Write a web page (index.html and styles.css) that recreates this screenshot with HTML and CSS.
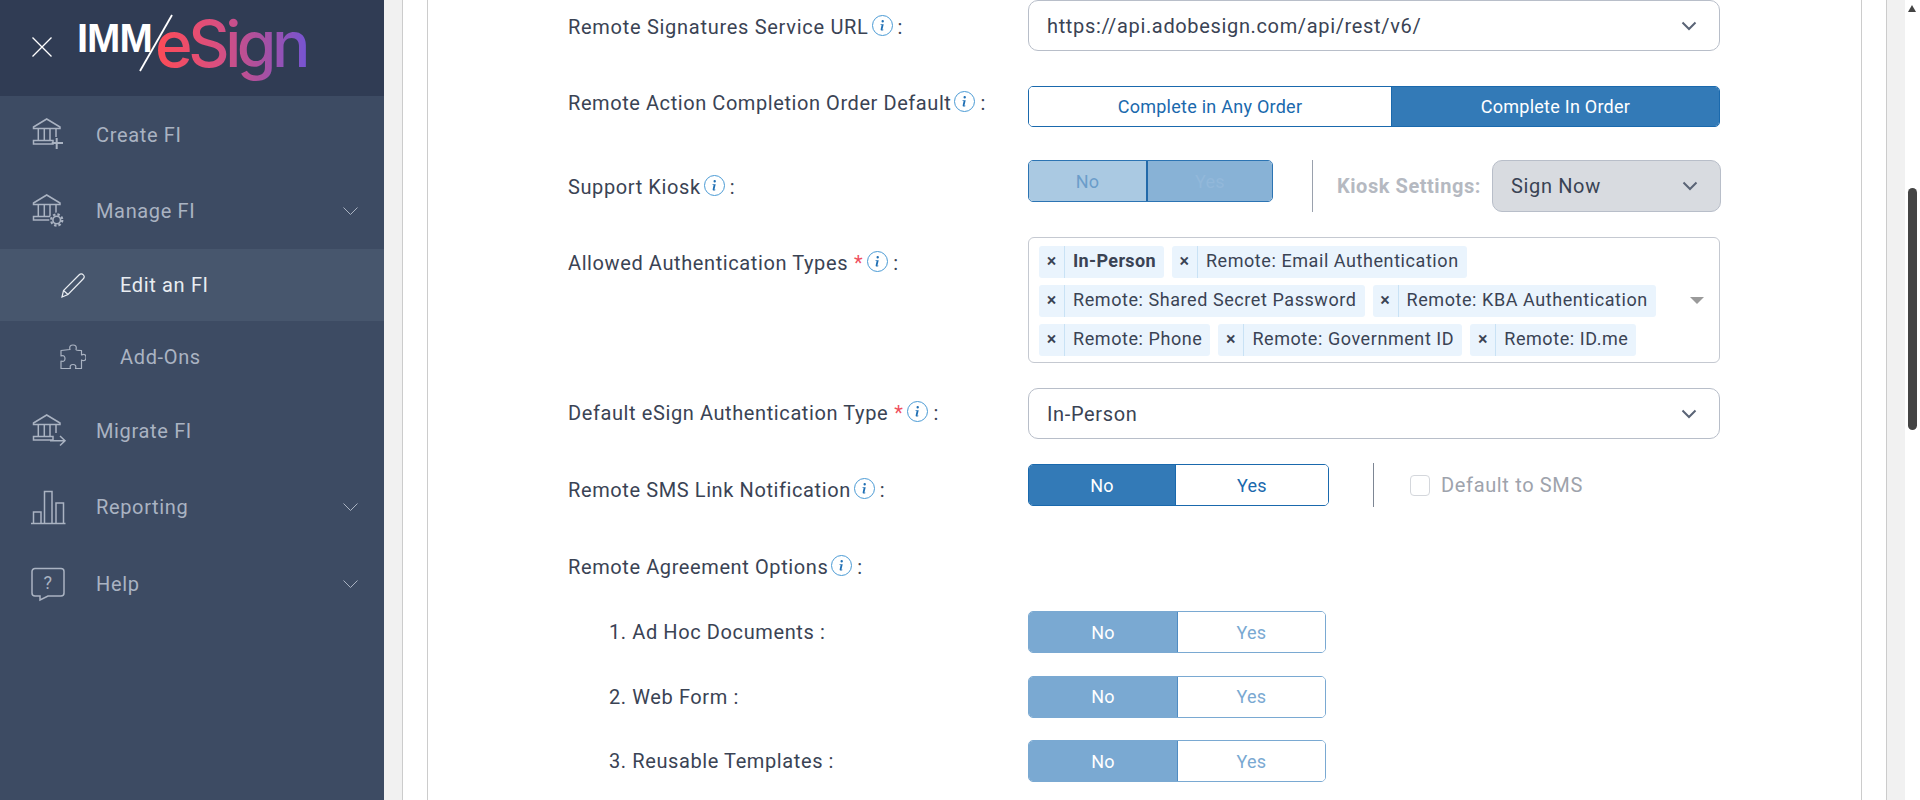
FILE: index.html
```html
<!DOCTYPE html>
<html lang="en">
<head>
<meta charset="utf-8">
<title>IMM eSign</title>
<link rel="stylesheet" href="styles.css">
</head>
<body>
<svg class="defs" aria-hidden="true">
  <symbol id="bank" viewBox="0 0 34 34">
    <path d="M1.500 10 14.700 2 28 10v1.500H1.500z M2.500 11.500v.5 M6.300 11.500V23 M12.300 11.500V23 M18 11.500V23 M24 11.500V20 M1.500 23.500h19.500v3.500H1.500z" fill="none" stroke="currentColor" stroke-width="1.500"/>
  </symbol>
  <symbol id="chev" viewBox="0 0 15 8">
    <path d="M.5.500 7.500 7.500l7-7" fill="none" stroke="currentColor" stroke-width="1"/>
  </symbol>
  <symbol id="selchev" viewBox="0 0 16 10">
    <path d="M1.500 1.500 8 8l6.500-6.500" fill="none" stroke="currentColor" stroke-width="2"/>
  </symbol>
  <symbol id="info" viewBox="0 0 21 21">
    <circle cx="10.500" cy="10.500" r="10" fill="#fff" stroke="#4a9ad4" stroke-width="1"/>
    <path d="M9.500 6.200a1.200 1.200 0 1 1 2.400 0 1.200 1.200 0 0 1-2.400 0zM8.400 9.200h3.300l-1.200 5.100c-.1.500.1.500.9.300l-.1.600c-1.100.5-3 .7-2.600-.9l.9-4.300-1.200-.2z" fill="#1f6fb4"/>
  </symbol>
</svg>
<div class="app">
  <aside class="sidebar">
    <header class="brand">
      <svg class="close" viewBox="0 0 20 20"><path d="M0.500 0.500 19.500 19.500M19.500 0.500 0.500 19.500" stroke="#fff" stroke-width="1.300" fill="none"/></svg>
      <div class="logo">
        <span class="logo-imm">IMM</span>
        <span class="logo-esign">eSign</span>
        <svg class="logo-slash" viewBox="0 0 34 58"><path d="M33 1 1 57" stroke="#fff" stroke-width="1.800"/></svg>
      </div>
    </header>
    <nav class="menu">
      <a class="item">
        <svg class="ico" viewBox="0 0 34 34"><use href="#bank" width="34" height="34"/><path d="M24.700 21v11M19.700 26h11.300" fill="none" stroke="currentColor" stroke-width="2"/></svg>
        <span>Create FI</span>
      </a>
      <a class="item">
        <svg class="ico" viewBox="0 0 34 34"><use href="#bank" width="34" height="34"/><circle cx="24.700" cy="27" r="7.500" fill="#3d4b63"/><circle cx="24.700" cy="27" r="3.800" fill="none" stroke="currentColor" stroke-width="1.600"/><circle cx="24.700" cy="27" r="5.600" fill="none" stroke="currentColor" stroke-width="2.200" stroke-dasharray="2.400 2.000"/></svg>
        <span>Manage FI</span>
        <svg class="chev"><use href="#chev"/></svg>
      </a>
      <a class="item sub active">
        <svg class="ico-sub" viewBox="0 0 26 26"><path d="M2 25l1.500-6.500L19 3c1.500-1.500 3-1.500 4.300-.2s1.300 2.800-.2 4.200L8 22.500z M3.500 18.500 8 22.500" fill="none" stroke="currentColor" stroke-width="1.200"/></svg>
        <span>Edit an FI</span>
      </a>
      <a class="item sub">
        <svg class="ico-sub" viewBox="0 0 26 26"><path d="M10 5.500C9 2 11 1 13 1s4 1 3 4.500c0 1 5.500 1 5.500 1v4.500c3-1.500 4.500 0 4.500 2.500s-1.500 4-4.500 2.500v8.500h-6c1-3-.5-4-2.500-4s-3.500 1-2.500 4H1v-7.500c3 1 4-.5 4-2.500s-1-3.500-4-2.500V6.500z" fill="none" stroke="currentColor" stroke-width="1.200" stroke-linejoin="round"/></svg>
        <span>Add-Ons</span>
      </a>
      <a class="item">
        <svg class="ico" viewBox="0 0 34 34"><use href="#bank" width="34" height="34"/><path d="M18 27.700h15.500M28 23l5 4.700-5 4.800" fill="none" stroke="currentColor" stroke-width="1.500"/></svg>
        <span>Migrate FI</span>
      </a>
      <a class="item">
        <svg class="ico" viewBox="0 0 34 34"><path d="M1.500 34V23h7.500v11M12.500 34V2.500h7.500V34M24 34V14h7.500v20M-1 34.500h34.500" fill="none" stroke="currentColor" stroke-width="1.500"/></svg>
        <span>Reporting</span>
        <svg class="chev"><use href="#chev"/></svg>
      </a>
      <a class="item help">
        <svg class="ico" viewBox="0 0 34 34"><path d="M3 2.500h26a3 3 0 0 1 3 3v21.500a3 3 0 0 1-3 3H16l-8 4v-4H3a3 3 0 0 1-3-3V5.500a3 3 0 0 1 3-3z" fill="none" stroke="currentColor" stroke-width="1.500"/><text x="16" y="23" text-anchor="middle" class="help-q">?</text></svg>
        <span>Help</span>
        <svg class="chev"><use href="#chev"/></svg>
      </a>
    </nav>
  </aside>
  <main class="content">
    <div class="outer">
      <section class="card">
        <div class="row row-1">
          <div class="label">Remote Signatures Service URL<svg class="i"><use href="#info"/></svg><span class="colon">:</span></div>
          <div class="select">https://api.adobesign.com/api/rest/v6/<svg class="selchev"><use href="#selchev"/></svg></div>
        </div>
        <div class="row row-2">
          <div class="label">Remote Action Completion Order Default<svg class="i"><use href="#info"/></svg><span class="colon">:</span></div>
          <div class="toggle wide">
            <span class="opt">Complete in Any Order</span>
            <span class="opt on">Complete In Order</span>
          </div>
        </div>
        <div class="row row-3">
          <div class="label">Support Kiosk<svg class="i"><use href="#info"/></svg><span class="colon">:</span></div>
          <div class="controls">
            <div class="toggle kiosk">
              <span class="opt">No</span>
              <span class="opt on">Yes</span>
            </div>
            <div class="divider"></div>
            <span class="kiosk-label">Kiosk Settings:</span>
            <div class="select disabled">Sign Now<svg class="selchev"><use href="#selchev"/></svg></div>
          </div>
        </div>
        <div class="row row-4">
          <div class="label">Allowed Authentication Types<span class="req">*</span><svg class="i"><use href="#info"/></svg><span class="colon">:</span></div>
          <div class="multi">
            <div class="tags">
              <span class="tag"><b class="x">×</b><strong>In-Person</strong></span>
              <span class="tag"><b class="x">×</b><span>Remote: Email Authentication</span></span>
              <span class="tag"><b class="x">×</b><span>Remote: Shared Secret Password</span></span>
              <span class="tag"><b class="x">×</b><span>Remote: KBA Authentication</span></span>
              <span class="tag"><b class="x">×</b><span>Remote: Phone</span></span>
              <span class="tag"><b class="x">×</b><span>Remote: Government ID</span></span>
              <span class="tag"><b class="x">×</b><span>Remote: ID.me</span></span>
            </div>
            <span class="caret"></span>
          </div>
        </div>
        <div class="row row-5">
          <div class="label">Default eSign Authentication Type<span class="req">*</span><svg class="i"><use href="#info"/></svg><span class="colon">:</span></div>
          <div class="select">In-Person<svg class="selchev"><use href="#selchev"/></svg></div>
        </div>
        <div class="row row-6">
          <div class="label">Remote SMS Link Notification<svg class="i"><use href="#info"/></svg><span class="colon">:</span></div>
          <div class="controls">
            <div class="toggle sms">
              <span class="opt on">No</span>
              <span class="opt">Yes</span>
            </div>
            <div class="divider sms-divider"></div>
            <label class="check"><span class="box"></span>Default to SMS</label>
          </div>
        </div>
        <div class="row row-7">
          <div class="label">Remote Agreement Options<svg class="i"><use href="#info"/></svg><span class="colon">:</span></div>
        </div>
        <div class="row row-sub">
          <div class="label indent">1. Ad Hoc Documents :</div>
          <div class="toggle faded">
            <span class="opt on">No</span>
            <span class="opt">Yes</span>
          </div>
        </div>
        <div class="row row-sub">
          <div class="label indent">2. Web Form :</div>
          <div class="toggle faded">
            <span class="opt on">No</span>
            <span class="opt">Yes</span>
          </div>
        </div>
        <div class="row row-sub">
          <div class="label indent">3. Reusable Templates :</div>
          <div class="toggle faded">
            <span class="opt on">No</span>
            <span class="opt">Yes</span>
          </div>
        </div>
      </section>
    </div>
  </main>
  <div class="scrollbar">
    <span class="sb-up"></span>
    <span class="sb-thumb"></span>
  </div>
</div>
</body>
</html>
```
FILE: styles.css
```css
* { box-sizing: border-box; }
html, body { margin: 0; height: 800px; overflow: hidden; }
body { font-family: Roboto, "Liberation Sans", sans-serif; color: #3a4354; }
.defs { position: absolute; width: 0; height: 0; }
.app { display: flex; height: 800px; }

.sidebar { width: 384px; flex: none; background: #3d4b63; color: #aab3c2; }
.brand { height: 96px; background: #303c54; display: flex; align-items: flex-start; padding: 37px 0 0 32px; }
.close { width: 20px; height: 20px; flex: none; }
.logo { position: relative; margin-left: 25px; height: 50px; width: 240px; }
.logo-imm { position: absolute; left: 0; top: -34px; font-family: "Liberation Sans", sans-serif; font-weight: 700; font-size: 40px; letter-spacing: -1px; line-height: 70px; color: #fff; }
.logo-slash { position: absolute; left: 62px; top: -23px; width: 34px; height: 58px; }
.logo-esign { position: absolute; left: 78px; top: -31px; font-family: Inter, sans-serif; font-weight: 500; font-size: 64px; letter-spacing: -4.400px; line-height: 76px; padding-right: 6px; background: linear-gradient(90deg, #ff4b55 0%, #d94f80 40%, #a950a0 68%, #7055d8 100%); -webkit-background-clip: text; background-clip: text; color: transparent; }

.menu { display: flex; flex-direction: column; padding-top: 1px; }
.item { display: flex; align-items: center; height: 76px; padding: 0 32px; font-size: 20px; letter-spacing: .65px; position: relative; }
.item span { margin-left: 30px; }
.ico { width: 34px; height: 34px; flex: none; margin-bottom: 2px; overflow: visible; }
.chev { position: absolute; right: 26px; top: 34px; width: 15px; height: 8px; }
.item.sub { height: 72px; padding-left: 60px; }
.item.sub span { margin-left: 34px; }
.ico-sub { width: 26px; height: 26px; flex: none; }
.item.active { background: #47566d; color: #e9edf2; }
.item.help { margin-top: 1px; }
.help-q { font-family: Roboto, sans-serif; font-size: 18px; fill: currentColor; }

.content { flex: 1; background: #f1f1f1; padding: 0 18px; }
.outer { height: 800px; background: #fff; border-left: 1px solid #ccc; border-right: 1px solid #ccc; padding: 0 24px; }
.card { height: 800px; background: #fff; border-left: 1px solid #ccc; border-right: 1px solid #ccc; padding-left: 140px; }

.scrollbar { width: 15px; flex: none; background: #fff; padding: 5px 3px 0; display: flex; flex-direction: column; }
.sb-up { width: 0; height: 0; border-left: 4.500px solid transparent; border-right: 4.500px solid transparent; border-bottom: 7px solid #444; }
.sb-thumb { width: 9px; height: 242px; margin-top: 176px; background: #444; border-radius: 4.500px; }

.row { display: flex; }
.label { width: 460px; flex: none; font-size: 20px; letter-spacing: .6px; line-height: 24px; color: #3a4354; display: flex; align-items: center; white-space: nowrap; height: 24px; }
.label.indent { padding-left: 41px; }
.colon { margin-left: 5px; }
.req { color: #ef5060; margin-left: 6px; }
.i { width: 21px; height: 21px; margin-left: 3px; flex: none; position: relative; top: -2px; }
.req + .i { margin-left: 4px; }

.select { width: 692px; height: 51px; border: 1px solid #b8bec9; border-radius: 10px; background: #fff; display: flex; align-items: center; justify-content: space-between; padding: 0 22px 0 18px; font-size: 20px; letter-spacing: .65px; color: #3a4354; }
.selchev { width: 16px; height: 10px; color: #5a6476; flex: none; }

.toggle { display: flex; height: 42px; border: 1px solid #1a69ad; border-radius: 5px; overflow: hidden; font-size: 18px; letter-spacing: .25px; }
.opt { display: flex; align-items: center; justify-content: center; flex: 1; color: #1a69ad; background: #fff; }
.opt.on { background: #337ab7; color: #fff; }
.wide { width: 692px; height: 41px; }
.wide .opt:first-child { flex: none; width: 363px; border-right: 1px solid #1a69ad; }
.controls { display: flex; align-items: flex-start; }
.kiosk { width: 245px; border-color: #2c74b3; }
.kiosk .opt { background: #aac9e2; color: #6b9dca; }
.kiosk .opt:first-child { flex: none; width: 119px; border-right: 2px solid #2269a9; }
.kiosk .opt.on { background: #88b2d6; color: #92b8da; }
.divider { width: 1px; height: 52px; background: #9aa1ad; margin-left: 39px; }
.sms-divider { height: 44px; margin-left: 44px; margin-top: -1px; background: #7d8694; }
.kiosk-label { font-weight: 700; font-size: 20px; letter-spacing: .55px; color: #b5b9c1; margin-left: 24px; line-height: 52px; white-space: nowrap; }
.select.disabled { width: 229px; height: 52px; background: #d8dbe0; margin-left: 11px; }

.multi { width: 692px; height: 126px; border: 1px solid #c5c9d1; border-radius: 6px; position: relative; padding: 8px 0 0 10px; }
.tags { display: flex; flex-wrap: wrap; gap: 7px 8px; width: 640px; }
.tag { display: flex; align-items: stretch; height: 32px; background: #eaf4fd; border-radius: 3px; font-size: 18px; letter-spacing: .57px; color: #3a4354; line-height: 30px; }
.tag .x { width: 26px; text-align: center; font-weight: 500; border-right: 1px solid #c9e2f5; font-size: 18px; letter-spacing: 0; }
.tag strong { padding: 0 8px; font-weight: 700; letter-spacing: .35px; }
.tag span { padding: 0 8px; }
.caret { position: absolute; right: 15px; top: 59px; border-style: solid; border-width: 7px 7px 0; border-color: #9a9a9a transparent transparent; }

.sms { width: 301px; }
.sms .opt.on { flex: none; width: 147px; border-right: 1px solid #1a69ad; }
.check { display: flex; align-items: center; font-size: 20px; letter-spacing: .65px; color: #9ea3ac; margin-left: 36px; height: 42px; }
.box { width: 20px; height: 21px; border: 1px solid #d4d7dc; border-radius: 4px; margin-right: 11px; }

.faded { width: 298px; border-color: #7aa9d2; }
.faded .opt { color: #7aa9d2; }
.faded .opt.on { flex: none; width: 149px; background: #7aa9d2; color: #fff; border-right: 1px solid #4f8cc3; }

.row-1 { height: 86px; }
.row-1 .label { margin-top: 15px; letter-spacing: .71px; }
.row-2 { height: 74px; }
.row-2 .label { margin-top: 5px; letter-spacing: .57px; }
.row-3 { height: 77px; }
.row-3 .label { margin-top: 15px; }
.row-4 { height: 151px; }
.row-4 .label { margin-top: 14px; }
.row-5 { height: 76px; }
.row-5 .label { margin-top: 13px; }
.row-6 { height: 76px; }
.row-6 .label { margin-top: 14px; }
.row-7 { height: 71px; }
.row-7 .label { margin-top: 15px; }
.row-sub { height: 64.500px; }
.row-sub .label { margin-top: 9px; }
```
